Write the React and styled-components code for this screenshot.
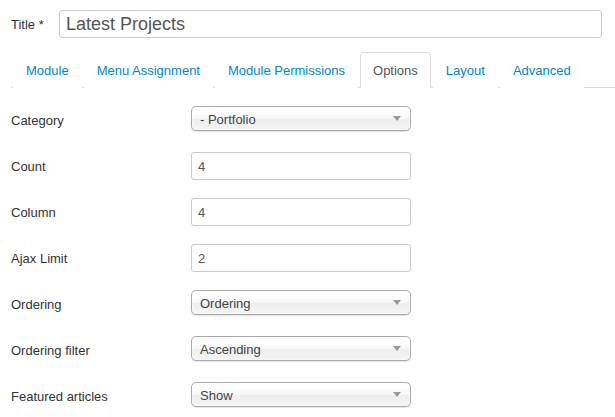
import React from "react";
import styled, { createGlobalStyle } from "styled-components";

const GlobalStyle = createGlobalStyle`
  body {
    margin: 0;
    background: #fff;
    font-family: "Liberation Sans", Arial, sans-serif;
    font-size: 13px;
    line-height: 18px;
    color: #333;
  }
`;

const Page = styled.div`
  padding: 10px 13px 0 11px;
`;

const TitleRow = styled.div`
  display: flex;
  align-items: flex-start;
  gap: 11px;
`;

const TitleLabel = styled.label`
  width: 37px;
  padding-top: 6px;
`;

const TitleInput = styled.input`
  flex: 1;
  box-sizing: border-box;
  height: 28px;
  padding: 1px 6px 0;
  border: 1px solid #ccc;
  border-radius: 3px;
  font-family: inherit;
  font-size: 18px;
  color: #555;
  outline: none;
`;

const Tabs = styled.ul`
  list-style: none;
  display: flex;
  margin: 14px -13px 18px 0;
  padding: 0 0 0 2px;
  border-bottom: 1px solid #ddd;
`;

const Tab = styled.li`
  margin: 0 2px -1px 0;
  padding: 9px 12px 7px;
  line-height: 18px;
  border: 1px solid ${(p) => (p.$active ? "#ddd" : "transparent")};
  border-bottom-color: ${(p) => (p.$active ? "#fff" : "transparent")};
  border-radius: 4px 4px 0 0;
  background: #fff;
  color: ${(p) => (p.$active ? "#555" : "#08c")};
`;

const Form = styled.div`
  display: flex;
  flex-direction: column;
  gap: 18px;
`;

const Row = styled.div`
  display: flex;
  align-items: flex-start;
  height: 28px;
`;

const Label = styled.label`
  width: 180px;
  padding-top: 6px;
`;

const TextInput = styled.div`
  box-sizing: border-box;
  width: 220px;
  height: 28px;
  padding: 5px 6px 3px;
  border: 1px solid #ccc;
  border-radius: 3px;
  color: #555;
`;

const Select = styled.div`
  box-sizing: border-box;
  position: relative;
  width: 220px;
  height: 25px;
  padding: 1px 8px 0;
  line-height: 23px;
  border: 1px solid #aaa;
  border-radius: 5px;
  color: #444;
  background: linear-gradient(#fff 20%, #f6f6f6 50%, #eee 52%, #f4f4f4 100%);
  box-shadow: inset 0 0 3px #fff, 0 1px 1px rgba(0, 0, 0, 0.1);
`;

const Arrow = styled.span`
  position: absolute;
  right: 9px;
  top: 9px;
  width: 0;
  height: 0;
  border-left: 4px solid transparent;
  border-right: 4px solid transparent;
  border-top: 5px solid #999;
`;

const tabs = ["Module", "Menu Assignment", "Module Permissions", "Options", "Layout", "Advanced"];

const fields = [
  { label: "Category", type: "select", value: "- Portfolio" },
  { label: "Count", type: "text", value: "4" },
  { label: "Column", type: "text", value: "4" },
  { label: "Ajax Limit", type: "text", value: "2" },
  { label: "Ordering", type: "select", value: "Ordering" },
  { label: "Ordering filter", type: "select", value: "Ascending" },
  { label: "Featured articles", type: "select", value: "Show" },
];

const App = () => {
  return (
    <Page>
      <GlobalStyle />
      <TitleRow>
        <TitleLabel>Title *</TitleLabel>
        <TitleInput defaultValue="Latest Projects" />
      </TitleRow>
      <Tabs>
        {tabs.map((t) => (
          <Tab key={t} $active={t === "Options"}>
            {t}
          </Tab>
        ))}
      </Tabs>
      <Form>
        {fields.map((f) => (
          <Row key={f.label}>
            <Label>{f.label}</Label>
            {f.type === "select" ? (
              <Select>
                {f.value}
                <Arrow />
              </Select>
            ) : (
              <TextInput>{f.value}</TextInput>
            )}
          </Row>
        ))}
      </Form>
    </Page>
  );
};

export default App;
